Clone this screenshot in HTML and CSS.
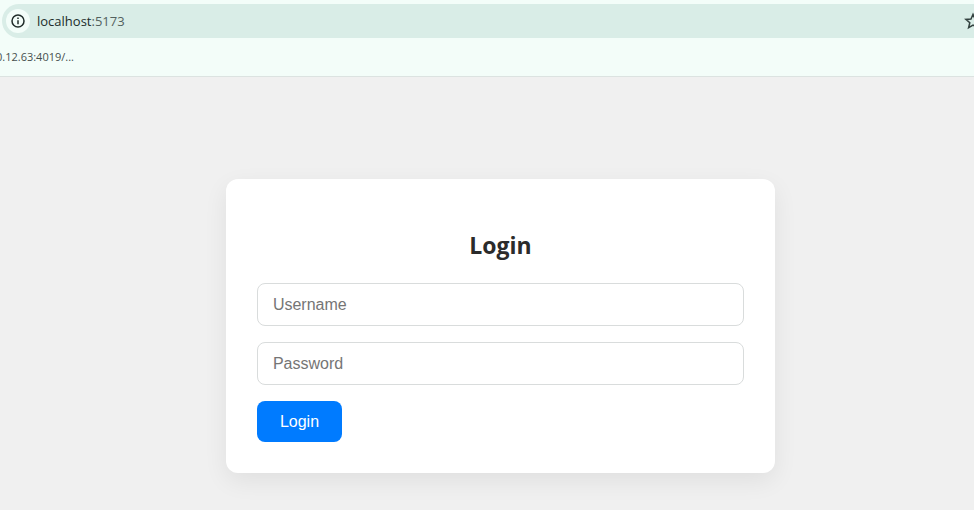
FILE: index.html
```html
<!DOCTYPE html>
<html lang="en">
<head>
    <meta charset="UTF-8">
    <meta name="viewport" content="width=device-width, initial-scale=1.0">
    <title>Login</title>
    <link rel="stylesheet" href="styles.css">
</head>
<body>

    <header class="browser-bar">
        <div class="address-bar">
            <button class="icon-button site-info" type="button" aria-label="Site information">
                <svg width="14" height="14" viewBox="0 0 14 14" fill="none" stroke="#202c2a">
                    <circle cx="7" cy="7" r="6" stroke-width="1.5"/>
                    <path d="M7 6.3v4M7 3.5v1.5" stroke-width="1.5"/>
                </svg>
            </button>
            <p class="url">localhost<span class="port">:5173</span></p>
            <button class="icon-button star" type="button" aria-label="Bookmark this page">
                <svg width="18" height="18" viewBox="0 0 18 18" fill="none" stroke="#33413f" stroke-width="1.5">
                    <path d="M9 2.3l2 4.7 5.1.4-3.9 3.3 1.2 5L9 13.1l-4.4 2.6 1.2-5L1.9 7.4 7 7z"/>
                </svg>
            </button>
        </div>
        <nav class="bookmarks">
            <a href="#">0.12.63:4019/...</a>
        </nav>
    </header>

    <main class="page">
        <form class="login-card">
            <h2>Login</h2>
            <input type="text" id="username" placeholder="Username" aria-label="Username">
            <input type="password" id="password" placeholder="Password" aria-label="Password">
            <button class="login-button" type="submit">Login</button>
        </form>
    </main>

</body>
</html>
```
FILE: styles.css
```css
* {
    margin: 0;
    padding: 0;
    box-sizing: border-box;
}

body {
    font-family: "Segoe UI", "Open Sans", sans-serif;
    background: #f0f0f0;
    color: #2b2b2b;
    min-height: 100vh;
    display: flex;
    flex-direction: column;
}

/* browser bar */
.browser-bar {
    background: #f3fdf9;
    border-bottom: 1px solid #dce3e1;
    padding-top: 4px;
    overflow: hidden;
}

.address-bar {
    display: flex;
    align-items: center;
    height: 34px;
    margin: 0 -40px 0 2px;
    padding: 0 32px 0 4px;
    background: #d9ede7;
    border-radius: 17px;
}

.icon-button {
    display: flex;
    align-items: center;
    justify-content: center;
    border: none;
    background: none;
    cursor: pointer;
}

.site-info {
    width: 24px;
    height: 24px;
    border-radius: 50%;
    background: #f3fdf9;
}

.url {
    flex: 1;
    padding-left: 7px;
    font-size: 13px;
    color: #202c2a;
}

.port {
    color: #53615e;
}

.bookmarks {
    display: flex;
    align-items: center;
    height: 38px;
    padding-bottom: 2px;
}

.bookmarks a {
    margin-left: -4px;
    font-size: 11px;
    color: #46504e;
    text-decoration: none;
}

/* login page */
.page {
    flex: 1;
    display: flex;
    justify-content: center;
    align-items: flex-start;
    padding: 102px 0 32px 27px;
}

.login-card {
    width: 58%;
    padding: 48px 31px 31px;
    display: flex;
    flex-direction: column;
    align-items: flex-start;
    gap: 16px;
    background: white;
    border-radius: 12px;
    box-shadow: 0 8px 24px rgba(0, 0, 0, 0.07);
}

.login-card h2 {
    width: 100%;
    margin-bottom: 4px;
    font-size: 23px;
    line-height: 36px;
    text-align: center;
}

.login-card input {
    width: 100%;
    height: 43px;
    padding: 0 15px;
    border: 1px solid #d9dcdc;
    border-radius: 8px;
    font-family: Arial, "Liberation Sans", sans-serif;
    font-size: 16px;
}

.login-card input::placeholder {
    color: #757575;
}

.login-button {
    height: 41px;
    padding: 0 23px;
    border: none;
    border-radius: 8px;
    background: #007bff;
    color: white;
    font-family: Arial, "Liberation Sans", sans-serif;
    font-size: 16px;
    cursor: pointer;
}

.login-button:hover {
    background: #0069d9;
}
```
